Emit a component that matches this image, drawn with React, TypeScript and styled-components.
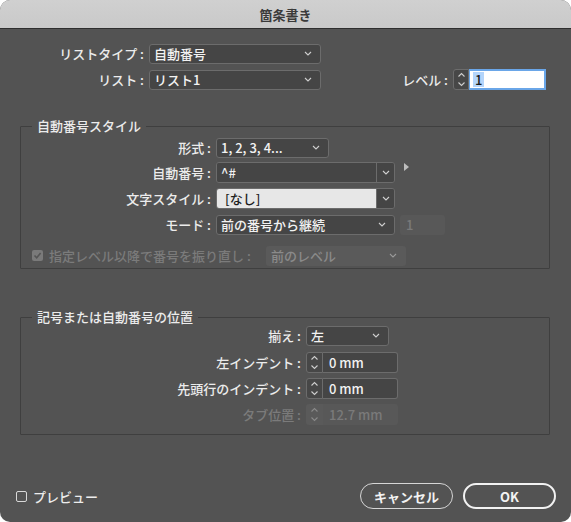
import React from "react";
import styled, { createGlobalStyle } from "styled-components";

const Global = createGlobalStyle`
  html, body { margin: 0; padding: 0; background: #ffffff; }
  * { box-sizing: border-box; }
  body { font-family: "Noto Sans CJK JP", "Noto Sans", sans-serif; }
`;

const Window = styled.div`
  width: 571px;
  height: 522px;
  border-radius: 10px;
  overflow: hidden;
  background: #535353;
  display: flex;
  flex-direction: column;
  font-family: "Noto Sans CJK JP", "Noto Sans", sans-serif;
  font-size: 13px;
  color: #ececec;
`;

const TitleBar = styled.div`
  height: 29px;
  flex: none;
  background: linear-gradient(#d0d0d0, #c9c9c9);
  border-bottom: 1px solid #2e2e2e;
  display: flex;
  align-items: center;
  justify-content: center;
  font-weight: 700;
  font-size: 13px;
  color: #3a3a3a;
`;

const Body = styled.div`
  flex: 1;
  display: flex;
  flex-direction: column;
  padding-top: 14px;
`;

const TopRow = styled.div<{ $mt?: number }>`
  display: flex;
  align-items: center;
  height: 21px;
  margin-top: ${(p) => p.$mt ?? 0}px;
  padding-left: 20px;
  padding-right: 25px;
`;

const Label = styled.div<{ $w: number; $disabled?: boolean }>`
  width: ${(p) => p.$w}px;
  flex: none;
  text-align: right;
  white-space: nowrap;
  font-weight: 500;
  color: ${(p) => (p.$disabled ? "#7b7b7b" : "#ececec")};
  margin-right: 5px;
  line-height: 20px;
`;

const Select = styled.div<{ $w: number; $disabled?: boolean; $ml?: number }>`
  width: ${(p) => p.$w}px;
  height: 20px;
  flex: none;
  display: flex;
  align-items: center;
  justify-content: space-between;
  margin-left: ${(p) => p.$ml ?? 0}px;
  padding: 0 8px 0 4px;
  border-radius: 3px;
  border: 1px solid ${(p) => (p.$disabled ? "transparent" : "#6c6c6c")};
  background: ${(p) => (p.$disabled ? "#5a5a5a" : "#454545")};
  color: ${(p) => (p.$disabled ? "#8a8a8a" : "#f2f2f2")};
  font-weight: 500;
  white-space: nowrap;
`;

const Combo = styled.div<{ $w: number }>`
  width: ${(p) => p.$w}px;
  height: 21px;
  flex: none;
  display: flex;
  border-radius: 3px;
  border: 1px solid #6c6c6c;
  overflow: hidden;
`;

const ComboField = styled.div<{ $light?: boolean }>`
  flex: 1;
  display: flex;
  align-items: center;
  padding-left: ${(p) => (p.$light ? 8 : 4)}px;
  background: ${(p) => (p.$light ? "#e7e7e7" : "#454545")};
  color: ${(p) => (p.$light ? "#1e1e1e" : "#f2f2f2")};
  font-weight: 500;
`;

const ComboButton = styled.div`
  width: 18px;
  flex: none;
  display: flex;
  align-items: center;
  justify-content: center;
  background: #454545;
  border-left: 1px solid #6c6c6c;
`;

const Arrow = styled.div`
  margin-left: 9px;
  margin-top: -12px;
  width: 0;
  height: 0;
  border-top: 4px solid transparent;
  border-bottom: 4px solid transparent;
  border-left: 5px solid #bdbdbd;
`;

const DisabledNum = styled.div`
  width: 45px;
  height: 20px;
  margin-left: 5px;
  border-radius: 3px;
  background: #585858;
  color: #7a7a7a;
  padding-left: 6px;
  display: flex;
  align-items: center;
  font-weight: 500;
`;

const Spin = styled.div<{ $w: number; $disabled?: boolean }>`
  width: ${(p) => p.$w}px;
  height: 21px;
  flex: none;
  display: flex;
  align-items: center;
  justify-content: center;
  border: 1px solid ${(p) => (p.$disabled ? "transparent" : "#6c6c6c")};
  border-radius: 3px 0 0 3px;
  background: ${(p) => (p.$disabled ? "#5a5a5a" : "#474747")};
`;

const NumField = styled.div<{ $w: number; $disabled?: boolean }>`
  width: ${(p) => p.$w}px;
  height: 21px;
  flex: none;
  display: flex;
  align-items: center;
  padding-left: 6px;
  border: 1px solid ${(p) => (p.$disabled ? "transparent" : "#6c6c6c")};
  border-left: none;
  border-radius: 0 3px 3px 0;
  background: ${(p) => (p.$disabled ? "#585858" : "#454545")};
  color: ${(p) => (p.$disabled ? "#7a7a7a" : "#f2f2f2")};
  font-weight: 500;
`;

const LevelBox = styled.div`
  margin-left: auto;
  display: flex;
  align-items: center;
`;

const LevelField = styled.div`
  width: 77px;
  height: 21px;
  display: flex;
  align-items: center;
  padding-left: 3px;
  background: #ffffff;
  border: 2px solid #6aa6e8;
  border-left-width: 1px;
  color: #1a1a1a;
  font-weight: 500;
`;

const Selected = styled.span`
  background: #b4d5fb;
  padding: 0 2px;
  line-height: 15px;
`;

const Group = styled.fieldset<{ $mt: number; $pt: number; $pb: number }>`
  margin: ${(p) => p.$mt}px 21px 0 20px;
  padding: ${(p) => p.$pt}px 0 ${(p) => p.$pb}px 0;
  border: 1px solid #3f3f3f;
  border-radius: 1px;
  min-width: 0;
`;

const Legend = styled.legend`
  margin-left: 11px;
  padding: 0 5px;
  font-weight: 500;
  color: #ececec;
  line-height: 16px;
`;

const GRow = styled.div<{ $mt?: number }>`
  display: flex;
  align-items: center;
  height: 21px;
  margin-top: ${(p) => p.$mt ?? 0}px;
`;

const CheckRow = styled.div<{ $mt: number }>`
  display: flex;
  align-items: center;
  height: 21px;
  margin-top: ${(p) => p.$mt}px;
  padding-left: 11px;
`;

const Check = styled.div<{ $disabled?: boolean }>`
  width: 11px;
  height: 11px;
  flex: none;
  border-radius: 2px;
  display: flex;
  align-items: center;
  justify-content: center;
  background: ${(p) => (p.$disabled ? "#7a7a7a" : "transparent")};
  border: ${(p) => (p.$disabled ? "none" : "1px solid #d8d8d8")};
`;

const CheckLabel = styled.div<{ $w?: number; $disabled?: boolean }>`
  margin-left: 6px;
  width: ${(p) => (p.$w ? `${p.$w}px` : "auto")};
  flex: none;
  white-space: nowrap;
  font-weight: 500;
  color: ${(p) => (p.$disabled ? "#7b7b7b" : "#ececec")};
`;

const Footer = styled.div`
  margin-top: auto;
  height: 63px;
  flex: none;
  display: flex;
  align-items: flex-start;
  padding: 24px 15px 0 16px;
`;

const PreviewBox = styled.div`
  display: flex;
  align-items: center;
  height: 26px;
`;

const Buttons = styled.div`
  margin-left: auto;
  display: flex;
  gap: 10px;
`;

const Button = styled.div<{ $primary?: boolean }>`
  width: 93px;
  height: 26px;
  border-radius: 13px;
  border: ${(p) => (p.$primary ? "2px solid #f2f2f2" : "1px solid #d6d6d6")};
  display: flex;
  align-items: center;
  justify-content: center;
  color: #f2f2f2;
  font-weight: 700;
`;

const Chevron = ({ color = "#cfcfcf" }: { color?: string }) => (
  <svg width="8" height="5" viewBox="0 0 8 5">
    <polyline points="1,1 4,4 7,1" fill="none" stroke={color} strokeWidth="1.1" />
  </svg>
);

const SpinIcon = ({ color = "#cfcfcf" }: { color?: string }) => (
  <svg width="9" height="17" viewBox="0 0 9 17">
    <polyline points="1.5,5.5 4.5,2.5 7.5,5.5" fill="none" stroke={color} strokeWidth="1.1" />
    <polyline points="1.5,11.5 4.5,14.5 7.5,11.5" fill="none" stroke={color} strokeWidth="1.1" />
  </svg>
);

const CheckMark = () => (
  <svg width="9" height="9" viewBox="0 0 9 9">
    <polyline points="1.5,4.5 3.7,6.8 7.6,2" fill="none" stroke="#555" strokeWidth="1.6" />
  </svg>
);

export default function App() {
  return (
    <>
      <Global />
      <Window>
        <TitleBar>箇条書き</TitleBar>
        <Body>
          <TopRow>
            <Label $w={124}>リストタイプ :</Label>
            <Select $w={172}>
              <span>自動番号</span>
              <Chevron />
            </Select>
          </TopRow>
          <TopRow $mt={5}>
            <Label $w={124}>リスト :</Label>
            <Select $w={172}>
              <span>リスト1</span>
              <Chevron />
            </Select>
            <LevelBox>
              <Label $w={46}>レベル :</Label>
              <Spin $w={16}>
                <SpinIcon />
              </Spin>
              <LevelField>
                <Selected>1</Selected>
              </LevelField>
            </LevelBox>
          </TopRow>

          <Group $mt={28} $pt={3} $pb={2}>
            <Legend>自動番号スタイル</Legend>
            <GRow>
              <Label $w={190}>形式 :</Label>
              <Select $w={113}>
                <span>1, 2, 3, 4...</span>
                <Chevron />
              </Select>
            </GRow>
            <GRow $mt={4}>
              <Label $w={190}>自動番号 :</Label>
              <Combo $w={179}>
                <ComboField>^#</ComboField>
                <ComboButton>
                  <Chevron />
                </ComboButton>
              </Combo>
              <Arrow />
            </GRow>
            <GRow $mt={5}>
              <Label $w={190}>文字スタイル :</Label>
              <Combo $w={179}>
                <ComboField $light>[なし]</ComboField>
                <ComboButton>
                  <Chevron />
                </ComboButton>
              </Combo>
            </GRow>
            <GRow $mt={5}>
              <Label $w={190}>モード :</Label>
              <Select $w={179}>
                <span>前の番号から継続</span>
                <Chevron />
              </Select>
              <DisabledNum>1</DisabledNum>
            </GRow>
            <CheckRow $mt={10}>
              <Check $disabled>
                <CheckMark />
              </Check>
              <CheckLabel $w={211} $disabled>
                指定レベル以降で番号を振り直し :
              </CheckLabel>
              <Select $w={140} $disabled $ml={6}>
                <span>前のレベル</span>
                <Chevron color="#9a9a9a" />
              </Select>
            </CheckRow>
          </Group>

          <Group $mt={40} $pt={0} $pb={9}>
            <Legend>記号または自動番号の位置</Legend>
            <GRow>
              <Label $w={280}>揃え :</Label>
              <Select $w={83}>
                <span>左</span>
                <Chevron />
              </Select>
            </GRow>
            <GRow $mt={6}>
              <Label $w={280}>左インデント :</Label>
              <Spin $w={17}>
                <SpinIcon />
              </Spin>
              <NumField $w={75}>0 mm</NumField>
            </GRow>
            <GRow $mt={5}>
              <Label $w={280}>先頭行のインデント :</Label>
              <Spin $w={17}>
                <SpinIcon />
              </Spin>
              <NumField $w={75}>0 mm</NumField>
            </GRow>
            <GRow $mt={5}>
              <Label $w={280} $disabled>
                タブ位置 :
              </Label>
              <Spin $w={17} $disabled>
                <SpinIcon color="#8a8a8a" />
              </Spin>
              <NumField $w={75} $disabled>
                12.7 mm
              </NumField>
            </GRow>
          </Group>

          <Footer>
            <PreviewBox>
              <Check />
              <CheckLabel>プレビュー</CheckLabel>
            </PreviewBox>
            <Buttons>
              <Button>キャンセル</Button>
              <Button $primary>OK</Button>
            </Buttons>
          </Footer>
        </Body>
      </Window>
    </>
  );
}
